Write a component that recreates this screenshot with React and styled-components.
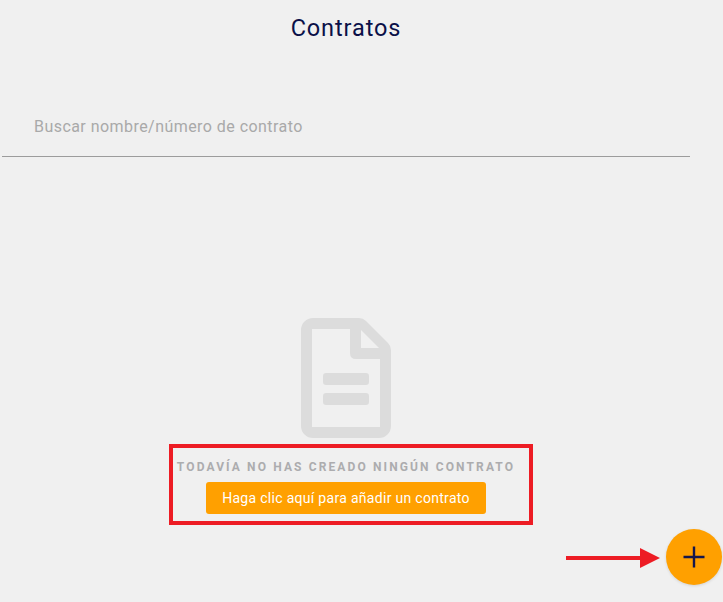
import React from "react"
import styled, { createGlobalStyle } from "styled-components"

const GlobalStyle = createGlobalStyle`
  html, body {
    margin: 0;
    padding: 0;
    background: #f0f0f0;
  }
  * {
    box-sizing: border-box;
  }
`

const Page = styled.main`
  position: relative;
  width: 723px;
  height: 602px;
  overflow: hidden;
  font-family: Roboto, "Liberation Sans", sans-serif;
  background: #f0f0f0;
`

const Title = styled.h1`
  width: 692px;
  margin: 0;
  padding-top: 13px;
  height: 56px;
  font-size: 23.5px;
  line-height: 30px;
  font-weight: 400;
  letter-spacing: 0.9px;
  text-align: center;
  color: #0b1048;
`

const SearchBar = styled.div`
  margin: 0 33px 0 2px;
  height: 101px;
  padding: 61px 0 0 32px;
  border-bottom: 1px solid #9c9c9c;
`

const SearchInput = styled.input`
  display: block;
  width: 100%;
  border: 0;
  padding: 0;
  outline: 0;
  background: transparent;
  font-family: inherit;
  font-size: 16px;
  line-height: 20px;
  letter-spacing: 0.45px;
  color: #333;

  &::placeholder {
    color: #a9a9a9;
    opacity: 1;
  }
`

const Empty = styled.section`
  display: flex;
  flex-direction: column;
  align-items: center;
  width: 692px;
  padding-top: 161px;
`

const DocIcon = styled.svg`
  display: block;
  width: 90px;
  height: 120px;
  fill: #dcdcdc;
`

const Callout = styled.div`
  display: flex;
  flex-direction: column;
  align-items: center;
  width: 364px;
  height: 81px;
  margin: 6px 0 0 10px;
  padding: 11px 10px 0 0;
  border: 4px solid #ed1c24;
`

const EmptyText = styled.p`
  margin: 0 0 7px;
  font-size: 12px;
  line-height: 16px;
  font-weight: 700;
  letter-spacing: 2.12px;
  white-space: nowrap;
  color: #acacae;
`

const AddButton = styled.button`
  flex: none;
  width: 280px;
  height: 32px;
  border: 0;
  border-radius: 3px;
  padding: 0;
  background: #ffa000;
  color: #fff;
  font-family: inherit;
  font-size: 14px;
  font-weight: 400;
  letter-spacing: 0.3px;
`

const Fab = styled.button`
  position: absolute;
  left: 666px;
  top: 529px;
  display: flex;
  align-items: center;
  justify-content: center;
  width: 56px;
  height: 56px;
  border: 0;
  border-radius: 50%;
  padding: 0;
  background: #ffa000;
  box-shadow: 0 1px 3px rgba(0, 0, 0, 0.12);
`

const Arrow = styled.svg`
  position: absolute;
  left: 566px;
  top: 548px;
  width: 94px;
  height: 20px;
  fill: #ed1c24;
`

export default function App() {
  return (
    <Page>
      <GlobalStyle />
      <Title>Contratos</Title>
      <SearchBar>
        <SearchInput placeholder="Buscar nombre/número de contrato" />
      </SearchBar>
      <Empty>
        <DocIcon viewBox="0 0 90 120">
          <path
            fillRule="evenodd"
            d="M12 0H58Q62 0 65 3L87 25Q90 28 90 32V108A12 12 0 0 1 78 120H12A12 12 0 0 1 0 108V12A12 12 0 0 1 12 0ZM11 11V109H79V41H55Q49 41 49 35V11ZM60 12V30H78Z"
          />
          <rect x="22" y="55" width="46" height="12" rx="3" />
          <rect x="22" y="75" width="46" height="12" rx="3" />
        </DocIcon>
        <Callout>
          <EmptyText>TODAVÍA NO HAS CREADO NINGÚN CONTRATO</EmptyText>
          <AddButton>Haga clic aquí para añadir un contrato</AddButton>
        </Callout>
      </Empty>
      <Arrow viewBox="0 0 94 20">
        <path d="M0 8H74V0L94 10L74 20V12H0Z" />
      </Arrow>
      <Fab aria-label="Añadir contrato">
        <svg width="22" height="22" viewBox="0 0 22 22" fill="none" stroke="#14174d" strokeWidth="2.4">
          <path d="M11 0.5V21.5M0.5 11H21.5" />
        </svg>
      </Fab>
    </Page>
  )
}
